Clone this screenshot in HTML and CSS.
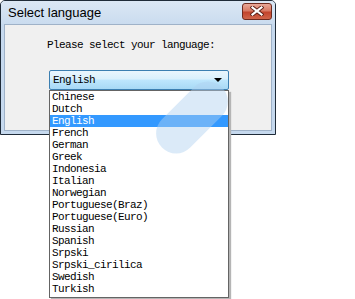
FILE: index.html
```html
<!DOCTYPE html>
<html>
<head>
<meta charset="utf-8">
<title>Select language</title>
<link rel="stylesheet" href="styles.css">
</head>
<body>
<div class="dialog">
	<div class="titlebar">
		<span class="title">Select language</span>
		<a href="#" class="close-btn"><svg width="14" height="10" viewBox="0 0 14 10"><path d="M2.5 1.5 L11.5 8.5 M11.5 1.5 L2.5 8.5" stroke="#5a2016" stroke-width="4" stroke-linecap="square"/><path d="M2.5 1.5 L11.5 8.5 M11.5 1.5 L2.5 8.5" stroke="#fff" stroke-width="2.2" stroke-linecap="square"/></svg></a>
	</div>
	<div class="client">
		<p class="prompt">Please select your language:</p>
		<div class="combo">
			<div class="combo-box">
				<span>English</span>
				<i class="arrow"></i>
			</div>
			<ul class="combo-list">
				<li>Chinese</li>
				<li>Dutch</li>
				<li class="selected">English</li>
				<li>French</li>
				<li>German</li>
				<li>Greek</li>
				<li>Indonesia</li>
				<li>Italian</li>
				<li>Norwegian</li>
				<li>Portuguese(Braz)</li>
				<li>Portuguese(Euro)</li>
				<li>Russian</li>
				<li>Spanish</li>
				<li>Srpski</li>
				<li>Srpski_cirilica</li>
				<li>Swedish</li>
				<li>Turkish</li>
			</ul>
		</div>
	</div>
</div>
<div class="watermark"></div>
</body>
</html>
```
FILE: styles.css
```css
html, body, ul, li, p, div { margin: 0; padding: 0; }
html, body { height: 100%; }
body { background: #fff; font-family: "Liberation Mono", "DejaVu Sans Mono", monospace; font-size: 11px; letter-spacing: -0.6px; min-height: 299px; }
li { list-style: none; }
a { text-decoration: none; }

.dialog { width: 276px; height: 135px; box-sizing: border-box; border: 1px solid #1f2b38; border-radius: 5px 5px 0 0; background: #c6d9ee; padding: 0 3px 3px; display: flex; flex-direction: column; }
.titlebar { height: 23px; display: flex; align-items: center; justify-content: space-between; padding-left: 4px; background: linear-gradient(#dbe7f4, #cadcef); margin: 0 -3px; padding-right: 3px; border-radius: 4px 4px 0 0; }
.title { font-family: "Liberation Sans", Arial, sans-serif; font-size: 13px; letter-spacing: 0; color: #000; padding-left: 3px; }
.close-btn { width: 28px; height: 15px; margin-top: -3px; border: 1px solid #6e2a1e; border-radius: 3px; background: linear-gradient(#e9a898, #d87a64 45%, #c2442c 55%, #d0654a); display: flex; align-items: center; justify-content: center; }

.client { flex: 1; background: #f0f0f0; border: 1px solid #9fb2c8; padding-left: 42px; }
.prompt { margin-top: 14px; height: 12px; line-height: 12px; color: #000; }

.combo { position: relative; margin-top: 19px; margin-left: 2px; width: 180px; }
.combo-box { height: 18px; border: 1px solid #3c7fb1; border-radius: 2px; background: linear-gradient(#eaf6fd, #d9f0fc 45%, #bee6fd 50%, #a7d9f5); display: flex; align-items: center; justify-content: space-between; padding: 0 6px 0 3px; color: #000; }
.arrow { width: 0; height: 0; border-left: 4px solid transparent; border-right: 4px solid transparent; border-top: 4px solid #000; }
.combo-list { position: absolute; left: 0; top: 20px; width: 178px; background: #fff; border: 1px solid #646464; box-shadow: 2px 2px 1px #b5b5b5; padding-bottom: 2px; z-index: 2; }
.combo-list li { height: 12px; line-height: 12px; padding-left: 2px; color: #000; }
.combo-list .selected { background: #3399ff; color: #fff; }

/* 水印 */
.watermark { position: absolute; left: 172px; top: 75px; width: 40px; height: 85px; border-radius: 20px; background: rgba(175, 208, 240, 0.45); transform: rotate(45deg); z-index: 3; pointer-events: none; }
```
